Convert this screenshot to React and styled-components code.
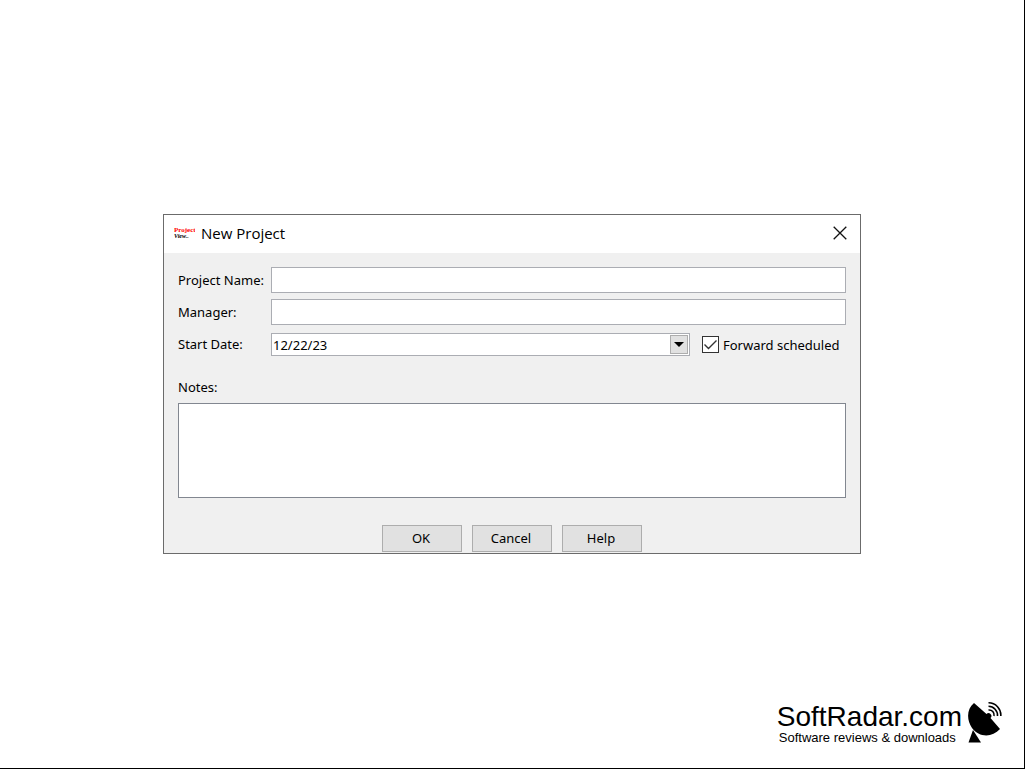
import React from "react";
import styled, { createGlobalStyle } from "styled-components";

const GlobalStyle = createGlobalStyle`
  *, *::before, *::after { box-sizing: border-box; }
  body {
    margin: 0;
    background: #fff;
    color: #000;
    font-family: "Noto Sans", "Open Sans", sans-serif;
    font-size: 13px;
    line-height: 18px;
  }
`;

const Page = styled.main`
  display: grid;
  grid-template-rows: 1fr auto 1fr;
  min-height: 100vh;
  border-right: 1px solid #000;
  border-bottom: 1px solid #000;
`;

const Dialog = styled.form`
  grid-row: 2;
  justify-self: center;
  width: 100%;
  max-width: 698px;
  border: 1px solid #6b6b6b;
  background: #f0f0f0;
`;

const TitleBar = styled.header`
  display: flex;
  align-items: center;
  height: 38px;
  padding: 0 13px 2px 10px;
  background: #fff;
`;

const Title = styled.h1`
  flex: 1;
  margin: 0 0 0 6px;
  font-family: "Open Sans", "Noto Sans", sans-serif;
  font-size: 15px;
  font-weight: 400;
  line-height: 20px;
`;

const CloseButton = styled.button`
  display: flex;
  padding: 0;
  border: 0;
  background: none;
`;

const Body = styled.div`
  padding: 14px 14px 1px;
`;

const Fields = styled.div`
  display: grid;
  grid-template-columns: 93px 1fr;
  row-gap: 6px;
  align-items: center;
`;

const Label = styled.label`
  white-space: nowrap;
`;

const TextInput = styled.input`
  width: 100%;
  height: 26px;
  padding: 0 2px;
  border: 1px solid #abadb3;
  background: #fff;
  font: inherit;
`;

const DateRow = styled.div`
  display: flex;
  align-items: center;
  padding-top: 2px;
`;

const Combo = styled.div`
  position: relative;
  flex: 1;
`;

const DateSelect = styled.select`
  display: block;
  appearance: none;
  width: 100%;
  height: 23px;
  padding: 0 1px;
  border: 1px solid #abadb3;
  border-radius: 0;
  background: #fff;
  color: #000;
  font: inherit;
`;

const ComboArrow = styled.span`
  position: absolute;
  top: 2px;
  right: 2px;
  bottom: 2px;
  display: flex;
  align-items: center;
  justify-content: center;
  width: 18px;
  border: 1px solid #adadad;
  background: #e1e1e1;
  pointer-events: none;
`;

const CheckLabel = styled.label`
  display: flex;
  align-items: center;
  gap: 4px;
  width: 156px;
  padding-left: 12px;
  white-space: nowrap;
`;

const CheckBox = styled.input`
  appearance: none;
  flex: none;
  width: 17px;
  height: 17px;
  margin: 0;
  border: 1px solid #333;
  background: #fff;
`;

const CheckBoxHolder = styled.span`
  position: relative;
  display: flex;
  svg {
    position: absolute;
    inset: 0;
    display: none;
    pointer-events: none;
  }
  input:checked + svg { display: block; }
`;

const NotesLabel = styled.label`
  display: block;
  padding: 22px 0 7px;
`;

const Notes = styled.textarea`
  display: block;
  width: 100%;
  height: 95px;
  padding: 2px;
  border: 1px solid #828790;
  border-radius: 0;
  background: #fff;
  font: inherit;
  resize: none;
`;

const Actions = styled.div`
  display: flex;
  justify-content: center;
  gap: 10px;
  padding-top: 27px;
`;

const ActionButton = styled.button`
  width: 80px;
  height: 27px;
  padding: 0 2px 2px 0;
  border: 1px solid #adadad;
  border-radius: 0;
  background: #e1e1e1;
  color: #000;
  font: inherit;
`;

const Brand = styled.footer`
  grid-row: 3;
  align-self: end;
  justify-self: end;
  display: flex;
  align-items: flex-end;
  gap: 6px;
  padding: 0 22px 23px 0;
  font-family: "Liberation Sans", Arial, sans-serif;
`;

const BrandName = styled.div`
  font-size: 28px;
  line-height: 28px;
`;

const Tagline = styled.div`
  padding-left: 2px;
  font-size: 13px;
  line-height: 14px;
`;

function AppLogo() {
  return (
    <svg width="21" height="14" viewBox="0 0 21 14" aria-hidden="true">
      <g fontFamily="Liberation Serif, serif" fontWeight="700">
        <text x="0" y="6" fontSize="7" fill="#f00">Project</text>
        <text x="0" y="12" fontSize="6" fill="#000" fontStyle="italic">View..</text>
      </g>
    </svg>
  );
}

function DishIcon() {
  return (
    <svg width="34" height="44" viewBox="0 0 34 44" aria-hidden="true">
      <path d="M6 2 C-1.500 8 -1.500 19 4 27 C11 36.500 24 37 32 28 L22.500 17 A2.600 2.600 0 1 0 18.500 13 Z" />
      <path d="M5 29 L13 41.500 H0.500 Z" />
      <g fill="none" stroke="#000" strokeWidth="1.600">
        <path d="M20.500 9 A5 5 0 0 1 26 15" />
        <path d="M20.500 5.300 A9 9 0 0 1 29.500 15" />
        <path d="M20.500 1.800 A12.300 12.300 0 0 1 32.800 15" />
      </g>
    </svg>
  );
}

export default function App() {
  return (
    <>
      <GlobalStyle />
      <Page>
        <Dialog onSubmit={(e) => e.preventDefault()}>
          <TitleBar>
            <AppLogo />
            <Title>New Project</Title>
            <CloseButton type="button" aria-label="Close">
              <svg width="14" height="14" viewBox="0 0 14 14">
                <path d="M.7 .7 L13.300 13.300 M13.300 .7 L.7 13.300" stroke="#111" strokeWidth="1.300" />
              </svg>
            </CloseButton>
          </TitleBar>
          <Body>
            <Fields>
              <Label htmlFor="name">Project Name:</Label>
              <TextInput id="name" type="text" />
              <Label htmlFor="manager">Manager:</Label>
              <TextInput id="manager" type="text" />
              <Label htmlFor="start">Start Date:</Label>
              <DateRow>
                <Combo>
                  <DateSelect id="start" defaultValue="12/22/23">
                    <option>12/22/23</option>
                  </DateSelect>
                  <ComboArrow>
                    <svg width="10" height="5" viewBox="0 0 10 5">
                      <path d="M0 0 H10 L5 5 Z" />
                    </svg>
                  </ComboArrow>
                </Combo>
                <CheckLabel>
                  <CheckBoxHolder>
                    <CheckBox type="checkbox" defaultChecked />
                    <svg width="17" height="17" viewBox="0 0 17 17">
                      <path d="M2.500 8.500 L6.500 12.500 L14.500 4.500" fill="none" stroke="#333" strokeWidth="1.400" />
                    </svg>
                  </CheckBoxHolder>
                  Forward scheduled
                </CheckLabel>
              </DateRow>
            </Fields>
            <NotesLabel htmlFor="notes">Notes:</NotesLabel>
            <Notes id="notes" />
            <Actions>
              <ActionButton type="submit">OK</ActionButton>
              <ActionButton type="button">Cancel</ActionButton>
              <ActionButton type="button">Help</ActionButton>
            </Actions>
          </Body>
        </Dialog>
        <Brand>
          <div>
            <BrandName>SoftRadar.com</BrandName>
            <Tagline>Software reviews &amp; downloads</Tagline>
          </div>
          <DishIcon />
        </Brand>
      </Page>
    </>
  );
}
